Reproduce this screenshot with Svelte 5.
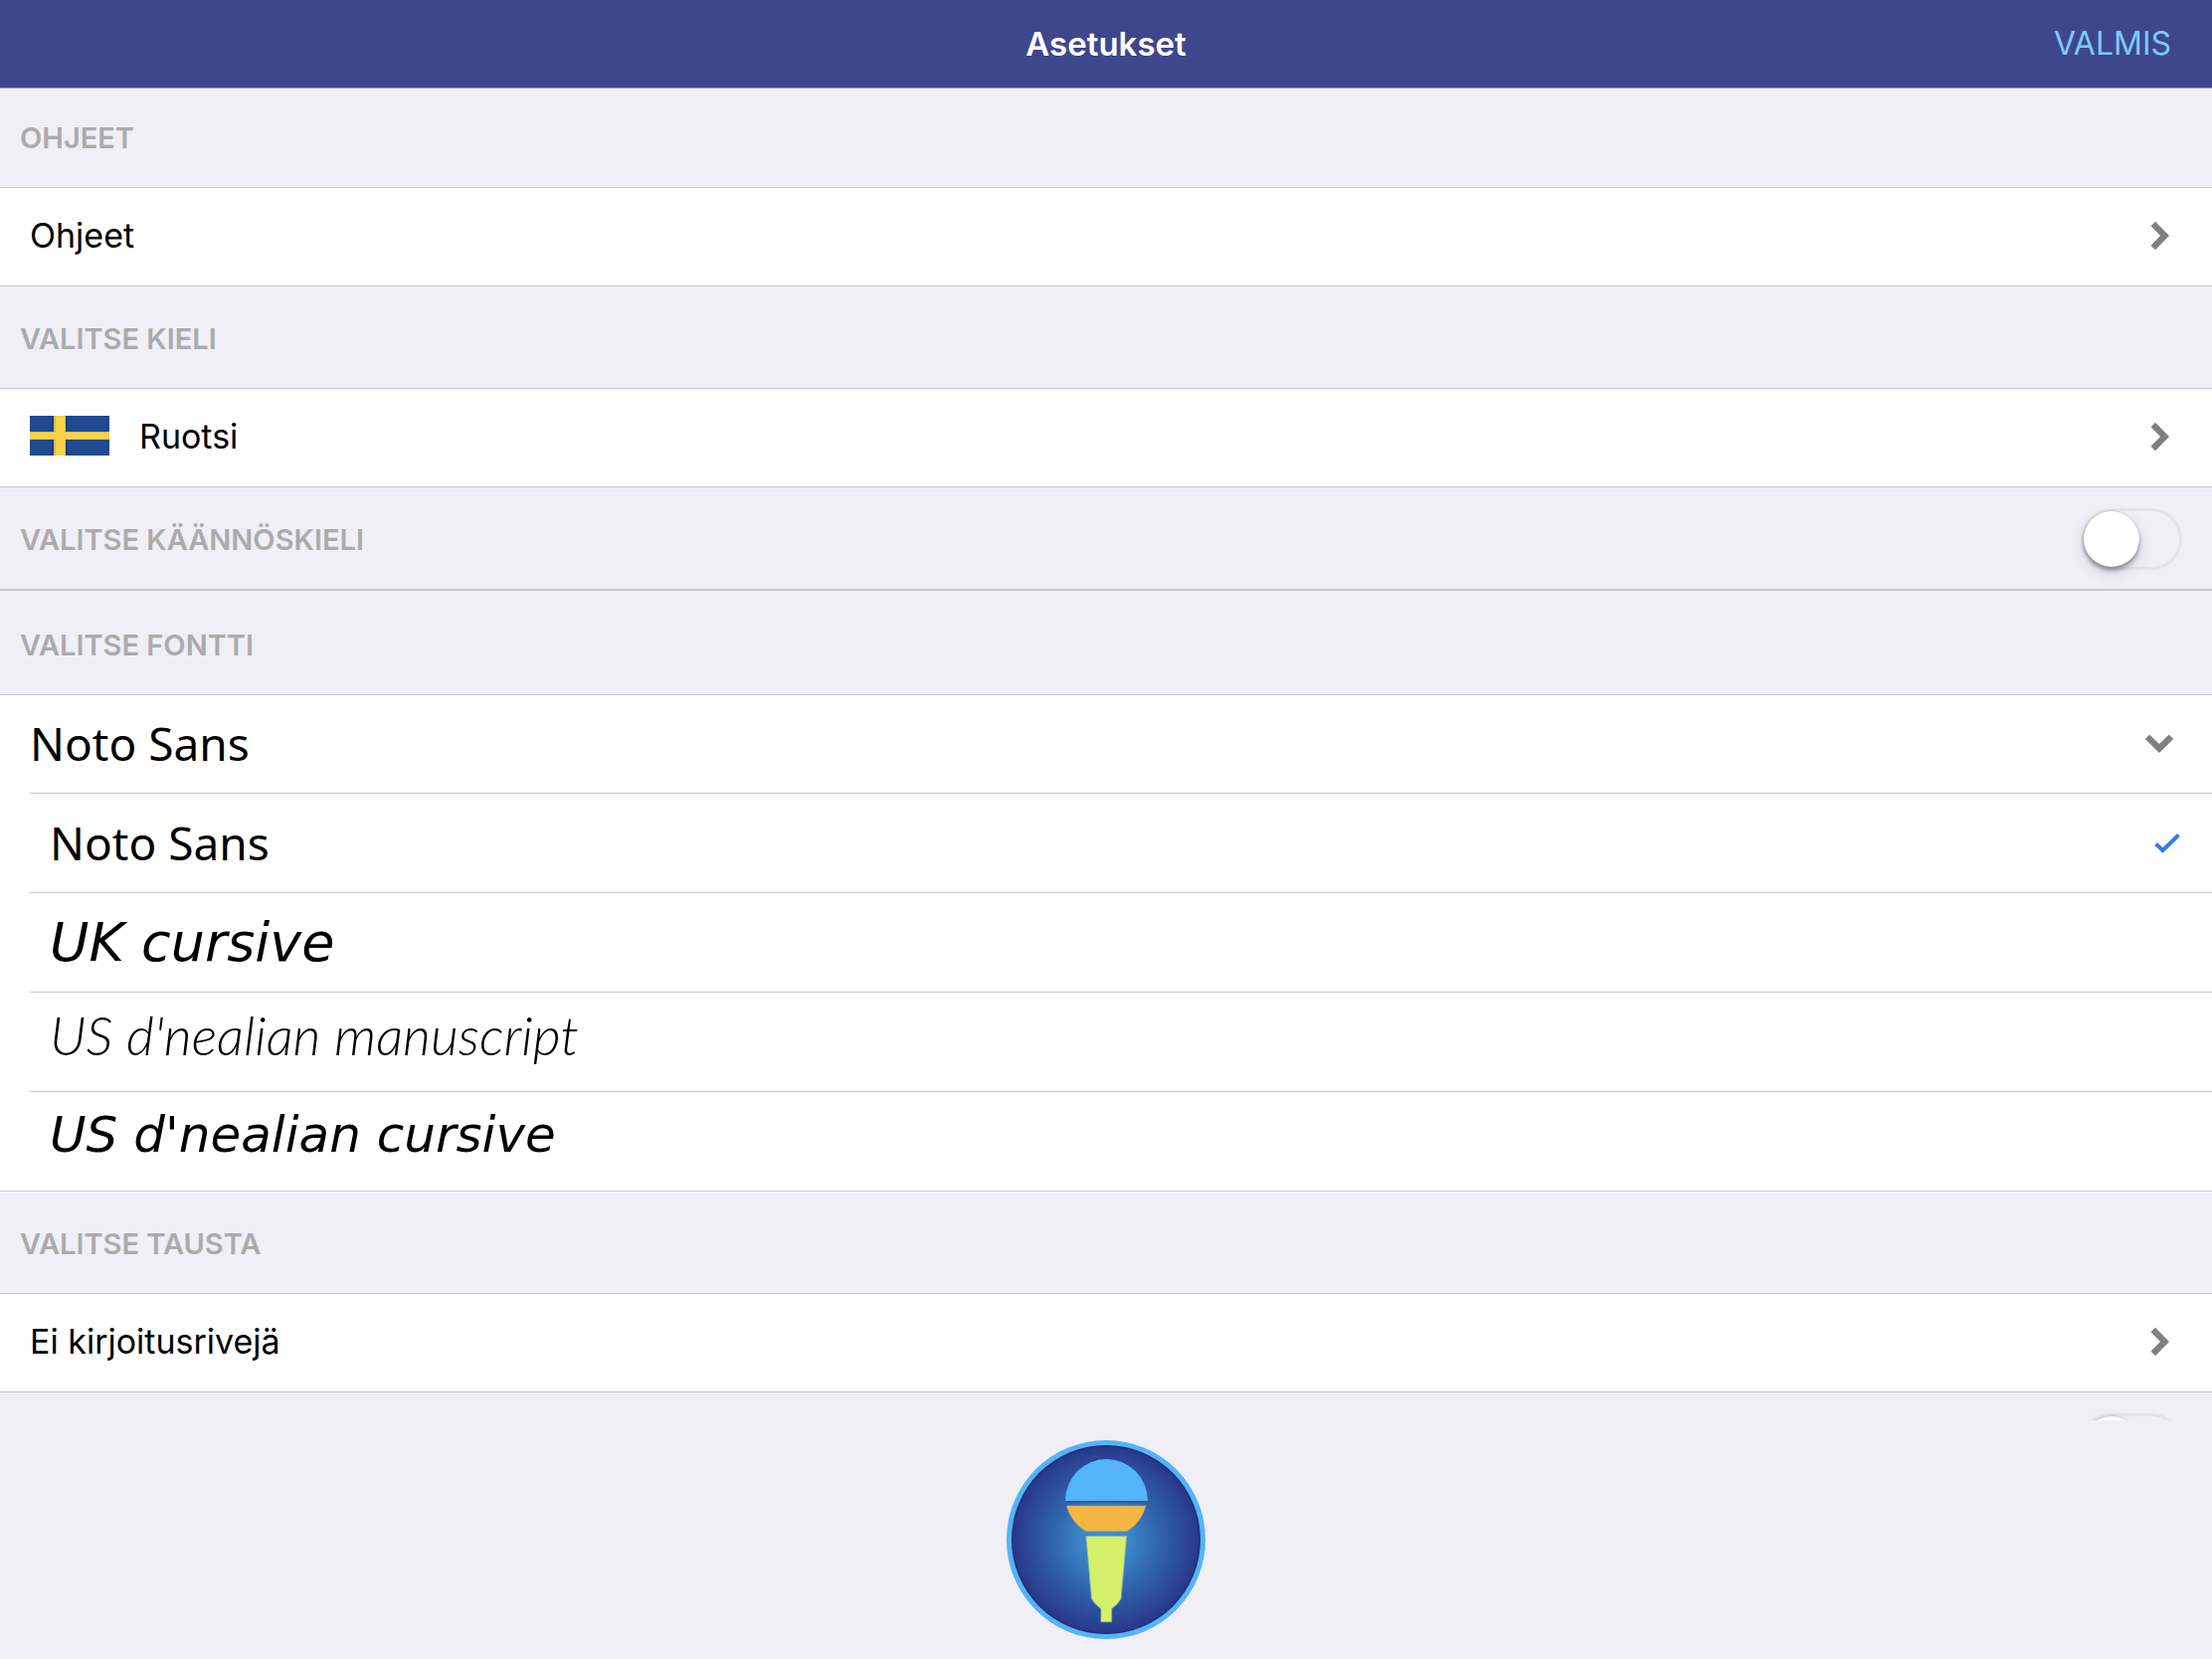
<script>
  const fonts = [
    { id: 'noto', label: 'Noto Sans', style: 'noto' },
    { id: 'uk', label: 'UK cursive', style: 'uk' },
    { id: 'us-manuscript', label: "US d'nealian manuscript", style: 'manuscript' },
    { id: 'us-cursive', label: "US d'nealian cursive", style: 'cursive' }
  ];
  let selected = $state('noto');
  let translate = $state(false);
  let background = $state(false);
</script>

{#snippet chevron(down)}
  <svg class="chevron" class:down viewBox="0 0 30 30" aria-hidden="true">
    <path d="M6.5 5.2 11 .8 25 15 11 29.2 6.5 24.8 16 15Z" />
  </svg>
{/snippet}

<div class="screen">
  <header>
    <h1>Asetukset</h1>
    <button class="done" type="button">VALMIS</button>
  </header>

  <main>
    <div class="heading first"><h2>OHJEET</h2></div>
    <button class="row" type="button">
      <span>Ohjeet</span>
      {@render chevron(false)}
    </button>

    <div class="heading"><h2>VALITSE KIELI</h2></div>
    <button class="row" type="button">
      <svg class="flag" viewBox="0 0 80 40" aria-hidden="true">
        <rect width="80" height="40" fill="#1f4a90" />
        <path d="M23 0V40M37 0V40" stroke="#12348a" stroke-width="2" opacity="0.6" />
        <path d="M24 0h12v16h44v8H36v16H24V24H0V16H24Z" fill="#d9bd56" />
        <path d="M26 0h9v17h45v6H35v17H26V23H0V17H26Z" fill="#f8d347" />
      </svg>
      <span>Ruotsi</span>
      {@render chevron(false)}
    </button>

    <div class="heading">
      <h2><label for="translate">VALITSE KÄÄNNÖSKIELI</label></h2>
      <input id="translate" class="switch" type="checkbox" role="switch" bind:checked={translate} />
    </div>
    <div class="heading divided"><h2>VALITSE FONTTI</h2></div>
    <div class="group">
      <button class="row plain" type="button" aria-expanded="true">
        <span class="noto">Noto Sans</span>
        {@render chevron(true)}
      </button>
      {#each fonts as font (font.id)}
        <label class="option">
          <span class={font.style}>{font.label}</span>
          <input type="radio" name="font" value={font.id} bind:group={selected} />
          {#if selected === font.id}
            <svg class="check" viewBox="0 0 26 20" aria-hidden="true">
              <path d="M1.500 10.500 8.500 17 24.500 1.500" fill="none" stroke="#367bee" stroke-width="4" />
            </svg>
          {/if}
        </label>
      {/each}
    </div>

    <div class="heading"><h2>VALITSE TAUSTA</h2></div>
    <button class="row" type="button">
      <span>Ei kirjoitusrivejä</span>
      {@render chevron(false)}
    </button>
    <div class="heading">
      <h2></h2>
      <input class="switch" type="checkbox" role="switch" aria-label="Tausta" bind:checked={background} />
    </div>
  </main>

  <footer>
    <button class="mic" type="button" aria-label="Mikrofoni">
      <svg viewBox="0 0 200 200" aria-hidden="true">
        <defs>
          <radialGradient id="disc">
            <stop offset="0" stop-color="#3d93d3" />
            <stop offset="0.25" stop-color="#3a86c8" />
            <stop offset="0.6" stop-color="#2f60aa" />
            <stop offset="0.97" stop-color="#293a8c" />
            <stop offset="1" stop-color="#1f2b72" />
          </radialGradient>
        </defs>
        <circle cx="100" cy="100" r="100" fill="#54b4f8" />
        <circle cx="100" cy="100" r="95" fill="url(#disc)" />
        <path d="M59 62h83" stroke="#2b5a9e" stroke-width="2" />
        <path d="M59 61A41.500 42 0 0 1 142 61Z" fill="#54b4f8" />
        <path d="M60.500 66H140C137 77 130 86.500 121 91.500H80C70.500 86.500 63.500 77 60.500 66Z" fill="#f5b642" stroke="#a3a38c" stroke-width="0.7" />
        <path d="M80 96.500H120.700L115 159.500Q111.500 165.500 105.700 169.500V182.700H95V169.500Q89 165.500 85.500 159.500Z" fill="#d4f068" stroke="#8fb8a0" stroke-width="0.8" />
      </svg>
    </button>
  </footer>
</div>

<style>
  :global(body) {
    margin: 0;
    background: #f0eff5;
  }

  .screen {
    display: flex;
    flex-direction: column;
    height: 100vh;
    overflow: hidden;
    background: #f0eff5;
    color: #000;
    font-family: Inter, 'Liberation Sans', sans-serif;
    font-size: 34px;
    line-height: 44px;
  }

  button {
    margin: 0;
    padding: 0;
    border: 0;
    background: none;
    color: inherit;
    font: inherit;
    text-align: left;
    cursor: pointer;
  }

  header {
    display: grid;
    grid-template-columns: 1fr auto 1fr;
    align-items: center;
    flex: none;
    height: 88px;
    padding: 0 41px;
    border-bottom: 1px solid #9c9cb0;
    background: #3e478b;
  }

  h1 {
    grid-column: 2;
    margin: 0;
    color: #fff;
    font-size: 33px;
    font-weight: 600;
  }

  .done {
    justify-self: end;
    color: #7ccafc;
    font-size: 32px;
  }

  main {
    flex: 1;
    min-height: 0;
    overflow: hidden;
  }

  .heading {
    display: flex;
    align-items: center;
    justify-content: space-between;
    height: 102px;
    box-sizing: border-box;
    padding: 2px 30px 0 20px;
  }

  .heading.first {
    height: 99px;
    padding-top: 0;
  }

  .heading.divided {
    height: 106px;
    padding-top: 4px;
    border-top: 2px solid #c8c7cc;
  }

  h2 {
    margin: 0;
    padding-top: 1px;
    color: #ababab;
    font-size: 29px;
    font-weight: 600;
    line-height: 36px;
  }

  .row {
    display: flex;
    align-items: center;
    width: 100%;
    height: 100px;
    box-sizing: border-box;
    padding: 0 38px 2px 30px;
    border: solid #c8c7cc;
    border-width: 1px 0;
    background: #fff;
  }

  .row.plain {
    height: 98px;
    border: 0;
  }

  .chevron {
    flex: none;
    width: 30px;
    height: 30px;
    margin-left: auto;
    fill: #808080;
  }

  .chevron.down {
    transform: rotate(90deg);
  }

  .flag {
    flex: none;
    width: 80px;
    height: 40px;
    margin: 0 30px 2px 0;
  }

  .group {
    border: solid #c8c7cc;
    border-width: 1px 0;
    background: #fff;
  }

  .option {
    display: flex;
    align-items: center;
    justify-content: space-between;
    height: 99px;
    margin-left: 30px;
    padding: 0 32px 0 20px;
    border-top: 1px solid #c8c7cc;
    cursor: pointer;
  }

  .option input {
    width: 0;
    height: 0;
    margin: 0 0 0 auto;
    appearance: none;
  }

  .check {
    width: 26px;
    height: 20px;
  }

  .noto {
    padding-bottom: 2px;
    font-family: 'Noto Sans', sans-serif;
    font-size: 46px;
  }

  .row .noto {
    padding-bottom: 0;
  }

  .uk,
  .cursive {
    font-family: 'DejaVu Sans', cursive;
    font-size: 54px;
    font-style: italic;
  }

  .manuscript {
    padding-bottom: 14px;
    font-family: Lato, cursive;
    font-size: 54px;
    font-style: italic;
    font-weight: 300;
  }

  .cursive {
    padding-bottom: 14px;
    font-size: 50px;
  }

  .switch {
    flex: none;
    width: 102px;
    height: 62px;
    box-sizing: border-box;
    margin: 0;
    border: 3px solid #e4e4e6;
    border-radius: 31px;
    appearance: none;
    cursor: pointer;
  }

  .switch::before {
    content: '';
    display: block;
    width: 56px;
    height: 56px;
    border-radius: 50%;
    background: #fff;
    box-shadow: 0 0 2px rgb(0 0 0 / 25%), 0 4px 4px rgb(0 0 0 / 30%), 0 6px 16px rgb(0 0 0 / 12%);
  }

  .switch:checked {
    background: #4cd964;
  }

  .switch:checked::before {
    margin-left: 40px;
  }

  footer {
    display: flex;
    flex: none;
    justify-content: center;
    padding: 20px;
  }

  .mic {
    width: 200px;
    height: 200px;
    border-radius: 50%;
  }

  .mic svg {
    display: block;
    width: 100%;
    height: 100%;
  }
</style>
